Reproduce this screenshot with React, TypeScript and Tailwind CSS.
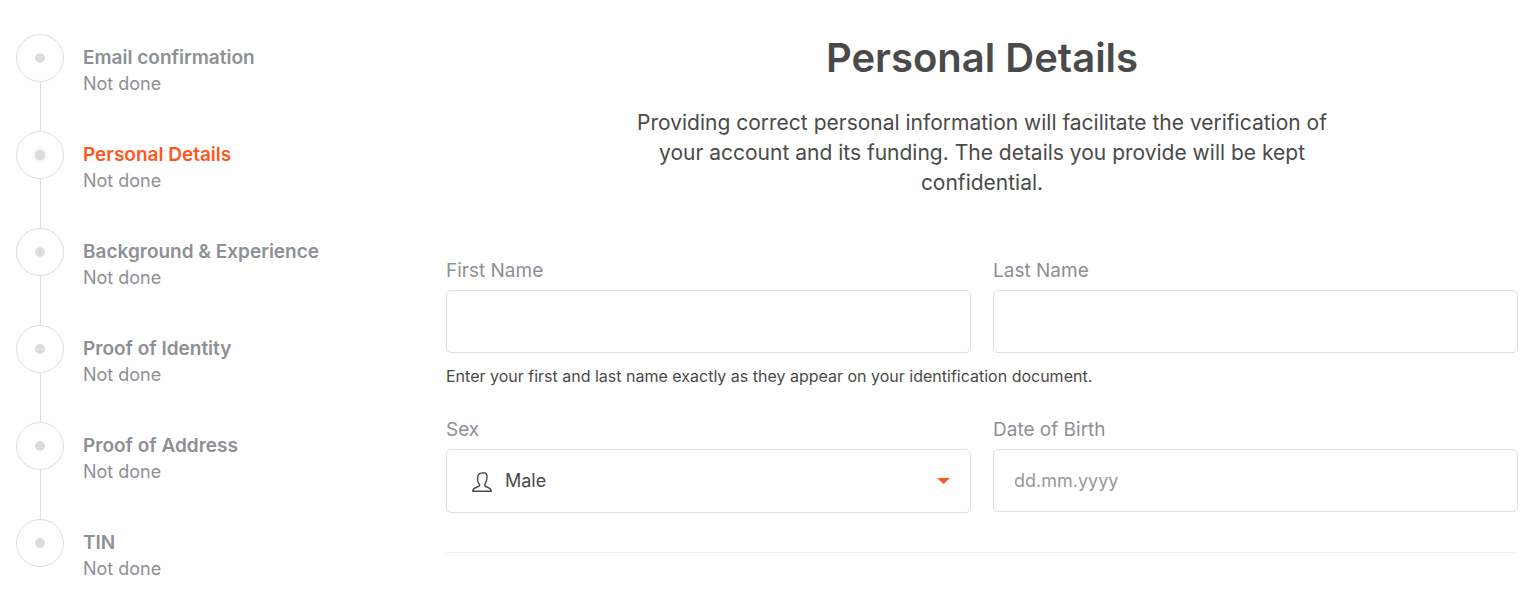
import type { ComponentProps } from 'react'
import { clsx } from 'clsx'

const steps = [
  { title: 'Email confirmation', status: 'Not done' },
  { title: 'Personal Details', status: 'Not done', active: true },
  { title: 'Background & Experience', status: 'Not done' },
  { title: 'Proof of Identity', status: 'Not done' },
  { title: 'Proof of Address', status: 'Not done' },
  { title: 'TIN', status: 'Not done' },
]

function Steps() {
  return (
    <ol className="w-[446px] shrink-0 pl-4">
      {steps.map((step) => (
        <li key={step.title} className="group flex h-[97px] gap-[19px]">
          <div className="flex w-12 flex-col items-center">
            <div className="flex size-12 shrink-0 items-center justify-center rounded-full border border-[#dedede]">
              <span
                className={clsx(
                  'size-2.5 rounded-full bg-[#dcdcdc]',
                  step.active && 'shadow-[0_0_5px_#dcdcdc]',
                )}
              />
            </div>
            <div className="w-px flex-1 bg-[#dedede] group-last:hidden" />
          </div>
          <div className="pt-3">
            <div
              className={clsx(
                'text-[19px]/6 font-semibold',
                step.active ? 'text-[#ff5722]' : 'text-[#8d9095]',
              )}
            >
              {step.title}
            </div>
            <div className="mt-0.5 text-lg/6 text-[#8d9095]">
              {step.status}
            </div>
          </div>
        </li>
      ))}
    </ol>
  )
}

interface FieldProps extends ComponentProps<'input'> {
  id: string
  label: string
}

function FieldLabel({ id, label }: { id: string; label: string }) {
  return (
    <label
      htmlFor={id}
      className="mb-[7px] block text-[19px]/6 text-[#8d9095]"
    >
      {label}
    </label>
  )
}

function TextField({ id, label, ...props }: FieldProps) {
  return (
    <div>
      <FieldLabel id={id} label={label} />
      <input
        id={id}
        type="text"
        className="block h-[63px] w-full rounded-[5px] border border-[#dedfe0] px-5 text-lg text-[#4a4a4a] outline-none placeholder:text-[#999]"
        {...props}
      />
    </div>
  )
}

function SexField() {
  return (
    <div>
      <FieldLabel id="sex" label="Sex" />
      <div className="relative">
        <select
          id="sex"
          defaultValue="Male"
          className="block h-16 w-full appearance-none rounded-[5px] border border-[#dedfe0] bg-white pr-12 pl-[58px] text-lg text-[#4a4a4a] outline-none"
        >
          <option>Male</option>
          <option>Female</option>
        </select>
        <svg
          viewBox="0 0 20 20"
          className="pointer-events-none absolute top-[23px] left-[26px] size-5"
          fill="none"
          stroke="#4a4a4a"
          strokeWidth="1.4"
          strokeLinejoin="round"
        >
          <path d="M.8 19.2C.8 17 1.7 16.2 4 15.5C6.3 14.8 7.600 14.200 7.600 13.100C7.600 12 6.300 11.300 6 9.300C5.600 8.600 5.200 7.700 5.700 6.800C5.400 3 7 1.300 9.500 1.100C11 1 12 .7 13.200 .9C15 1.600 15.300 3.700 14.800 6.600C15.100 7.600 14.700 8.500 14.200 9.200C13.900 11.100 12.600 12 12.600 13.100C12.600 14.200 13.700 14.800 16 15.500C18.300 16.200 19.200 17 19.200 19.200Z" />
        </svg>
        <svg
          viewBox="0 0 13 6"
          className="pointer-events-none absolute top-[29px] right-[21px] h-1.5 w-[13px]"
        >
          <path d="M0 0H13L6.5 6Z" fill="#ff5722" />
        </svg>
      </div>
    </div>
  )
}

export default function App() {
  return (
    <div className="flex bg-white pt-[34px] pr-[22px] font-['Inter',sans-serif]">
      <Steps />
      <main className="min-w-0 flex-1">
        <h1 className="text-center text-[40px]/12 font-semibold text-[#4a4a4a]">
          Personal Details
        </h1>
        <p className="mx-auto mt-[26px] max-w-[720px] text-center text-[21px]/[30px] text-[#4a4a4a]">
          Providing correct personal information will facilitate the
          verification of your account and its funding. The details you provide
          will be kept confidential.
        </p>
        <form className="mt-[61px] border-b border-[#f1f1f3] pb-[39px]">
          <div className="grid grid-cols-2 gap-x-[22px]">
            <TextField id="first-name" label="First Name" />
            <TextField id="last-name" label="Last Name" />
          </div>
          <p className="mt-[11px] mb-[30px] text-base/6 text-[#4a4a4a]">
            Enter your first and last name exactly as they appear on your
            identification document.
          </p>
          <div className="grid grid-cols-2 gap-x-[22px]">
            <SexField />
            <TextField
              id="birth-date"
              label="Date of Birth"
              placeholder="dd.mm.yyyy"
            />
          </div>
        </form>
      </main>
    </div>
  )
}
